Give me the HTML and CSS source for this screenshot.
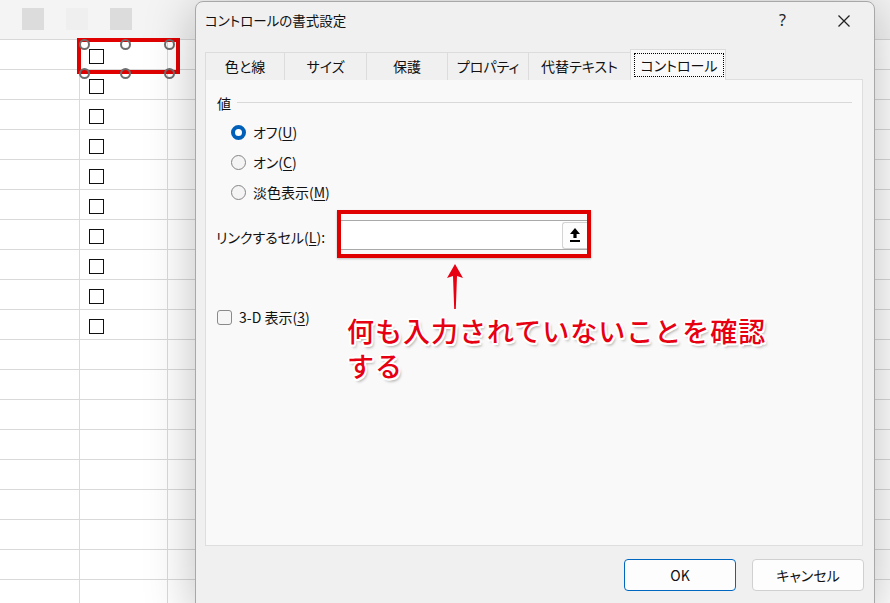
FILE: index.html
```html
<!DOCTYPE html>
<html lang="ja">
<head>
<meta charset="utf-8">
<link rel="stylesheet" href="styles.css">
</head>
<body>
<div class="screen">
  <div class="sheet">
    <div class="sheet-head">
      <span class="blk b1"></span><span class="blk b2"></span><span class="blk b3"></span>
    </div>
    <div class="row"><div class="c a"></div><div class="c b"><span class="cb"></span></div><div class="c rest"></div></div>
    <div class="row"><div class="c a"></div><div class="c b"><span class="cb"></span></div><div class="c rest"></div></div>
    <div class="row"><div class="c a"></div><div class="c b"><span class="cb"></span></div><div class="c rest"></div></div>
    <div class="row"><div class="c a"></div><div class="c b"><span class="cb"></span></div><div class="c rest"></div></div>
    <div class="row"><div class="c a"></div><div class="c b"><span class="cb"></span></div><div class="c rest"></div></div>
    <div class="row"><div class="c a"></div><div class="c b"><span class="cb"></span></div><div class="c rest"></div></div>
    <div class="row"><div class="c a"></div><div class="c b"><span class="cb"></span></div><div class="c rest"></div></div>
    <div class="row"><div class="c a"></div><div class="c b"><span class="cb"></span></div><div class="c rest"></div></div>
    <div class="row"><div class="c a"></div><div class="c b"><span class="cb"></span></div><div class="c rest"></div></div>
    <div class="row"><div class="c a"></div><div class="c b"><span class="cb"></span></div><div class="c rest"></div></div>
    <div class="row"><div class="c a"></div><div class="c b"></div><div class="c rest"></div></div>
    <div class="row"><div class="c a"></div><div class="c b"></div><div class="c rest"></div></div>
    <div class="row"><div class="c a"></div><div class="c b"></div><div class="c rest"></div></div>
    <div class="row"><div class="c a"></div><div class="c b"></div><div class="c rest"></div></div>
    <div class="row"><div class="c a"></div><div class="c b"></div><div class="c rest"></div></div>
    <div class="row"><div class="c a"></div><div class="c b"></div><div class="c rest"></div></div>
    <div class="row"><div class="c a"></div><div class="c b"></div><div class="c rest"></div></div>
    <div class="row"><div class="c a"></div><div class="c b"></div><div class="c rest"></div></div>
    <div class="row"><div class="c a"></div><div class="c b"></div><div class="c rest"></div></div>
  </div>

  <div class="selframe">
    <span class="h h1"></span><span class="h h2"></span><span class="h h3"></span>
    <span class="h h4"></span><span class="h h5"></span><span class="h h6"></span>
  </div>

  <div class="dialog">
    <div class="titlebar">
      <span class="title">コントロールの書式設定</span>
      <span class="help">?</span>
      <svg class="close" width="14" height="14" viewBox="0 0 14 14"><path d="M1.5 1.5 L12.5 12.5 M12.5 1.5 L1.5 12.5" stroke="#222" stroke-width="1.3" fill="none"/></svg>
    </div>
    <div class="tabs">
      <div class="tab w1">色と線</div>
      <div class="tab w2">サイズ</div>
      <div class="tab w3">保護</div>
      <div class="tab w4">プロパティ</div>
      <div class="tab w5">代替テキスト</div>
      <div class="tab active"><span class="focus">コントロール</span></div>
    </div>
    <div class="panel">
      <div class="legend"><span>値</span><span class="line"></span></div>
      <div class="opt"><span class="radio on"></span><span>オフ(<u>U</u>)</span></div>
      <div class="opt"><span class="radio"></span><span>オン(<u>C</u>)</span></div>
      <div class="opt"><span class="radio"></span><span>淡色表示(<u>M</u>)</span></div>
      <div class="link">
        <span class="link-label">リンクするセル(<u>L</u>):</span>
        <div class="redbox">
          <div class="input">
            <span class="pick">
              <svg width="12" height="16" viewBox="0 0 12 16"><path d="M6 1 L11 7 L7.6 7 L7.6 11 L4.4 11 L4.4 7 L1 7 Z" fill="#000"/><rect x="1" y="13" width="10" height="2" fill="#000"/></svg>
            </span>
          </div>
        </div>
      </div>
      <div class="check3d"><span class="chk"></span><span>3-D 表示(<u>3</u>)</span></div>
    </div>
    <div class="buttons">
      <button class="btn ok">OK</button>
      <button class="btn">キャンセル</button>
    </div>
  </div>

  <svg class="arrow" width="24" height="48" viewBox="0 0 24 48">
    <path d="M12 1 L20 15 L14 13 L12.8 46 L11.2 46 L10 13 L4 15 Z" fill="#e60012"/>
  </svg>
  <div class="note">何も入力されていないことを確認<br>する</div>
</div>
</body>
</html>
```
FILE: styles.css
```css
* { box-sizing: border-box; }
html, body { margin: 0; padding: 0; }
body {
  width: 890px; height: 603px; overflow: hidden;
  font-family: "Noto Sans CJK JP", "Noto Sans", sans-serif;
  font-feature-settings: "palt";
  color: #1a1a1a;
  background: #fff;
}
.screen { position: relative; width: 890px; height: 603px; overflow: hidden; }

/* spreadsheet */
.sheet { width: 890px; }
.sheet-head {
  height: 40px; background: #f4f4f4; border-bottom: 1px solid #d8d8d8;
  display: flex; align-items: flex-start; padding: 8px 0 0 22px; gap: 22px;
}
.blk { width: 22px; height: 22px; background: #dcdcdc; }
.blk.b2 { background: #efefef; }
.row {
  height: 30px; border-bottom: 1px solid #d9d9d9;
  display: grid; grid-template-columns: 80px 88px 1fr;
}
.c.a, .c.b { border-right: 1px solid #dadada; }
.c.b { padding: 9px 0 0 9px; }
.cb { display: block; width: 15px; height: 15px; border: 1.5px solid #111; background: #fff; }

.selframe {
  position: absolute; left: 77px; top: 38px; width: 103px; height: 36px;
  border: 4px solid #e00000;
}
.h {
  position: absolute; width: 11px; height: 11px; border-radius: 50%;
  border: 2px solid #6e6e6e; background: transparent;
}
.h1 { left: -2px; top: -3px; }
.h2 { left: 39px; top: -3px; }
.h3 { left: 83px; top: -3px; }
.h4 { left: -2px; top: 26px; }
.h5 { left: 39px; top: 26px; }
.h6 { left: 83px; top: 26px; }

/* dialog */
.dialog {
  position: absolute; left: 195px; top: 1px; width: 680px; height: 610px;
  background: #f0f0f0; border: 1px solid #a8a8a8; border-radius: 8px;
  box-shadow: 0 6px 50px rgba(0,0,0,0.26);
  display: flex; flex-direction: column;
}
.titlebar {
  height: 47px; display: flex; align-items: flex-start; padding: 8px 0 0 9px;
  font-size: 13.5px;
}
.title { flex: 1; color: #111; }
.help { width: 14px; margin-right: 44px; font-size: 16px; color: #222; font-family: "Noto Sans", sans-serif; margin-top: -1px; }
.close { margin: 4px 23px 0 0; }

.tabs {
  display: flex; align-items: flex-end; height: 31px; margin-left: 9px;
  margin-bottom: -1px; position: relative; z-index: 2;
}
.tab {
  height: 28px; border: 1px solid #dcdcdc; border-right: none; border-bottom: none;
  background: #f0f0f0; font-size: 14px; color: #111;
  display: flex; align-items: center; justify-content: center; padding-bottom: 1px;
}
.w1 { width: 79px; } .w2 { width: 82px; } .w3 { width: 81px; } .w4 { width: 81px; }
.w5 { width: 102px; border-right: none; }
.tab.active {
  width: 96px; height: 31px; background: #f9f9f9; border: 1px solid #dcdcdc; border-bottom: none;
  padding: 3px 1px 3px 3px; align-items: stretch;
}
.focus {
  flex: 1; border: 1px dotted #000; display: flex; align-items: center; justify-content: center;
}

.panel {
  margin-left: 9px; width: 658px; height: 467px;
  background: #f9f9f9; border: 1px solid #dedede;
  font-size: 14px; color: #111;
  display: flex; flex-direction: column;
}
.legend {
  display: flex; align-items: center; height: 20px; margin: 13px 10px 0 11px; gap: 6px;
}
.legend .line { flex: 1; height: 1px; background: #d9d9d9; margin-top: -2px; }
.opt { height: 30px; display: flex; align-items: center; padding-left: 25px; gap: 7px; }
.legend + .opt { margin-top: 4px; }
.radio {
  width: 15px; height: 15px; border-radius: 50%; border: 1px solid #858585; background: #f4f4f4;
}
.radio.on { border: 4px solid #005fb8; background: #fff; }
u { text-decoration-thickness: 1px; text-underline-offset: 2px; }

.link { display: flex; align-items: center; height: 48px; margin-top: 3px; padding-left: 10px; }
.link-label { width: 121px; margin-top: 5px; }
.redbox {
  width: 254px; height: 48px; border: 4px solid #e00000; padding: 6px 0 0 0;
  box-shadow: 0 1px 2px rgba(0,0,0,0.25);
}
.input {
  height: 30px; background: #fff; border-top: 1px solid #a9a9a9; border-bottom: 1px solid #a9a9a9;
  display: flex; justify-content: flex-end; align-items: center; padding-right: 0;
}
.pick {
  width: 25px; height: 27px; border: 1px solid #d4d4d4; border-right: none; border-radius: 3px 0 0 3px;
  background: #fdfdfd; display: flex; align-items: center; justify-content: center;
}

.check3d { display: flex; align-items: center; gap: 7px; height: 20px; margin-top: 49px; padding-left: 11px; }
.chk { width: 15px; height: 15px; border: 1px solid #8a8a8a; border-radius: 3px; background: #f6f6f6; }

.buttons { display: flex; justify-content: flex-end; gap: 16px; margin-top: 13px; padding-right: 10px; }
.btn {
  width: 112px; height: 32px; border-radius: 4px; border: 1px solid #d0d0d0; background: #fdfdfd;
  font-family: "Noto Sans CJK JP", "Noto Sans", sans-serif; font-feature-settings: "palt";
  font-size: 14px; color: #111; padding: 0;
}
.btn.ok { border-color: #0067c0; }

.arrow { position: absolute; left: 443px; top: 263px; }
.note {
  position: absolute; left: 347px; top: 313px;
  font-size: 27px; line-height: 35px; font-weight: 500; color: #e60012; letter-spacing: 1px;
  font-feature-settings: normal;
  text-shadow: 2px 0 0 #fff, -2px 0 0 #fff, 0 2px 0 #fff, 0 -2px 0 #fff,
    1.5px 1.5px 0 #fff, -1.5px -1.5px 0 #fff, 1.5px -1.5px 0 #fff, -1.5px 1.5px 0 #fff,
    2px 3px 3px rgba(0,0,0,0.35);
}
```
